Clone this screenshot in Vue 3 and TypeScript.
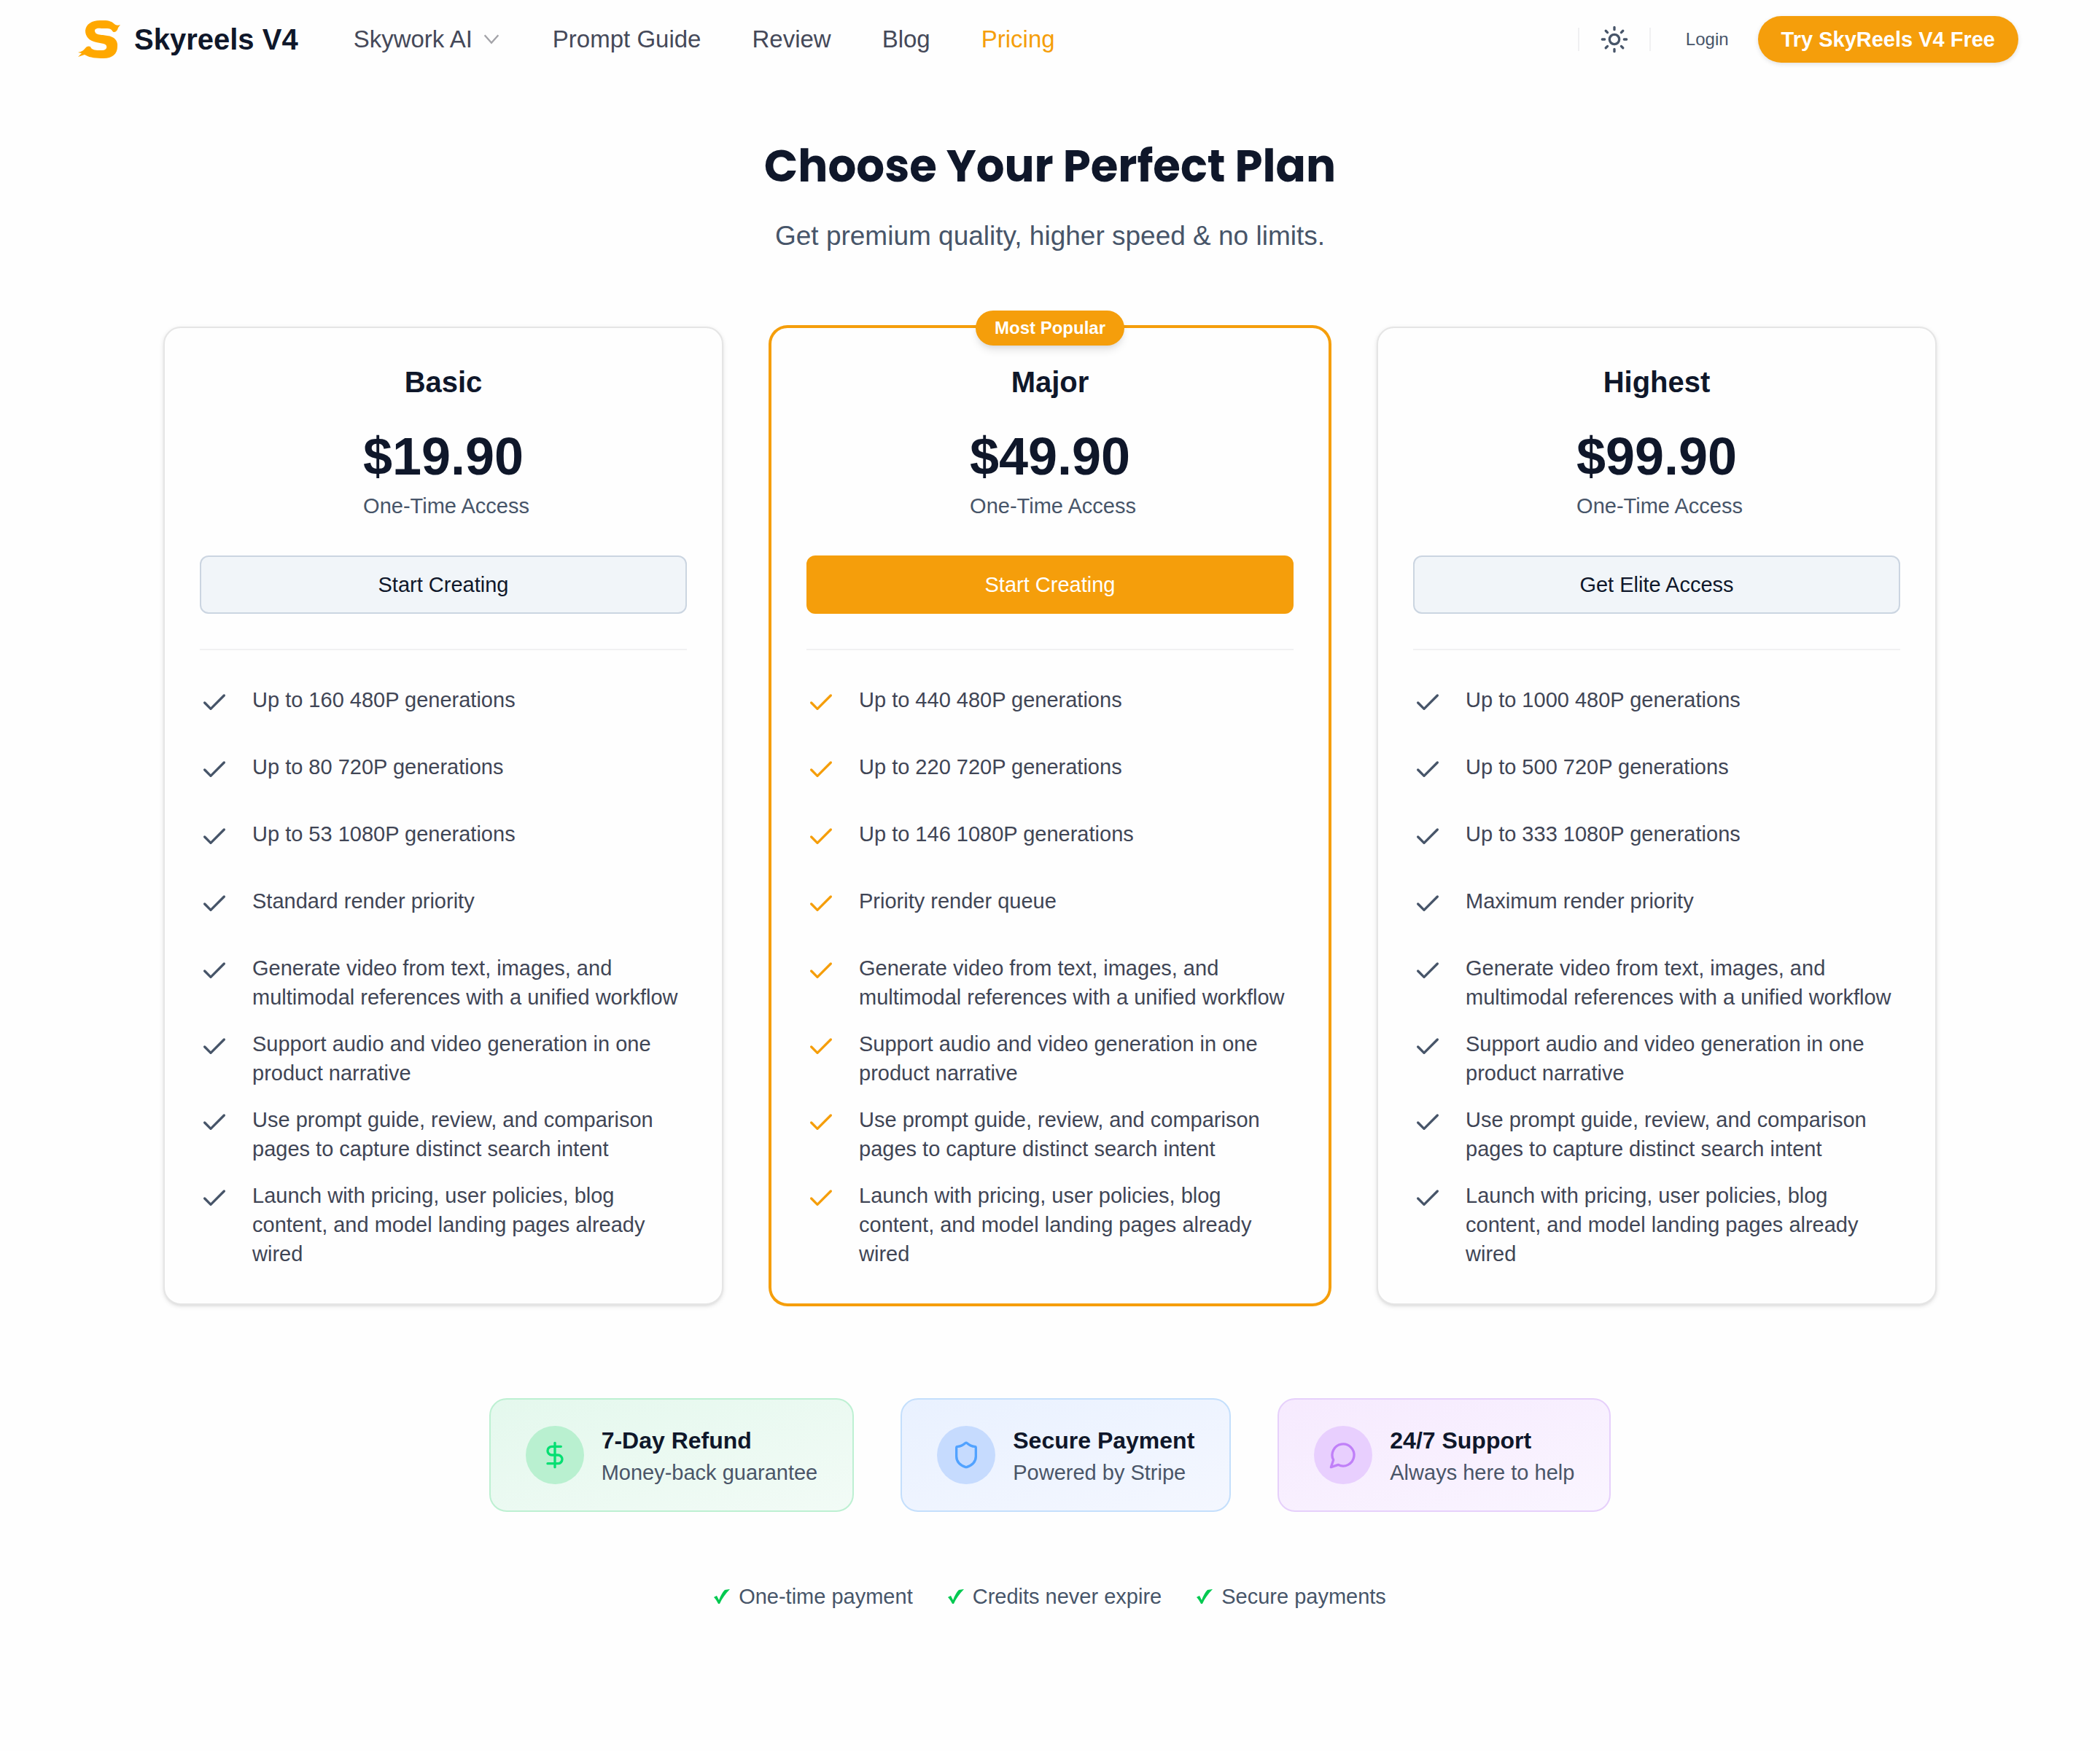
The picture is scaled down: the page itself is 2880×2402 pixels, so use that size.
<script setup lang="ts">
interface Plan {
  name: string
  price: string
  action: string
  popular?: boolean
  features: string[]
}

const shared: string[] = [
  'Generate video from text, images, and multimodal references with a unified workflow',
  'Support audio and video generation in one product narrative',
  'Use prompt guide, review, and comparison pages to capture distinct search intent',
  'Launch with pricing, user policies, blog content, and model landing pages already wired',
]

const plans: Plan[] = [
  {
    name: 'Basic',
    price: '$19.90',
    action: 'Start Creating',
    features: ['Up to 160 480P generations', 'Up to 80 720P generations', 'Up to 53 1080P generations', 'Standard render priority', ...shared],
  },
  {
    name: 'Major',
    price: '$49.90',
    action: 'Start Creating',
    popular: true,
    features: ['Up to 440 480P generations', 'Up to 220 720P generations', 'Up to 146 1080P generations', 'Priority render queue', ...shared],
  },
  {
    name: 'Highest',
    price: '$99.90',
    action: 'Get Elite Access',
    features: ['Up to 1000 480P generations', 'Up to 500 720P generations', 'Up to 333 1080P generations', 'Maximum render priority', ...shared],
  },
]

const badges = [
  {
    tone: 'green',
    title: '7-Day Refund',
    text: 'Money-back guarantee',
    paths: ['M12 2v20', 'M17 5H9.5a3.5 3.5 0 0 0 0 7h5a3.5 3.5 0 0 1 0 7H6'],
  },
  {
    tone: 'blue',
    title: 'Secure Payment',
    text: 'Powered by Stripe',
    paths: [
      'M20 13c0 5-3.5 7.5-7.66 8.95a1 1 0 0 1-.67-.01C7.5 20.5 4 18 4 13V6a1 1 0 0 1 1-1c2 0 4.5-1.2 6.24-2.72a1.17 1.17 0 0 1 1.52 0C14.51 3.81 17 5 19 5a1 1 0 0 1 1 1z',
    ],
  },
  {
    tone: 'purple',
    title: '24/7 Support',
    text: 'Always here to help',
    paths: ['M7.9 20A9 9 0 1 0 4 16.1L2 22Z'],
  },
]

const notes: string[] = ['One-time payment', 'Credits never expire', 'Secure payments']
</script>

<template>
  <div class="page">
    <header class="header">
      <a class="brand" href="#">
        <svg class="logo" viewBox="0 0 64 64" aria-hidden="true">
          <path
            d="M61 12 L58 16 C57 20 55 22 52 22 C50 22 50 17 43 17 L35 17 C28 16 24 18 27 23 C28 25 33 26 37 26 L43 27 C53 28 58 34 57 42 C57 52 50 58 38 58 C28 58 19 57 14 54 L12 53 L3 56 L8 51 L3 50 C8 49 11 47 13 44 C15 41 18 41 20 42 C21 46 26 47 32 47 L36 47 C44 47 44 39 38 38 L28 36 C18 34 13 28 13 20 C14 11 22 6 33 6 L38 6 C46 6 50 8 53 11 C55 13 58 13 61 12 Z"
          />
        </svg>
        <span>Skyreels V4</span>
      </a>
      <nav class="nav">
        <button class="menu" type="button">
          Skywork AI
          <svg class="chevron" viewBox="0 0 24 24" aria-hidden="true"><path d="m4 7 8 9 8-9" /></svg>
        </button>
        <a href="#">Prompt Guide</a>
        <a href="#">Review</a>
        <a href="#">Blog</a>
        <a class="current" href="#">Pricing</a>
      </nav>
      <div class="tools">
        <div class="theme">
          <button type="button" aria-label="Theme">
            <svg class="icon" viewBox="0 0 24 24" aria-hidden="true">
              <circle cx="12" cy="12" r="4" />
              <path
                d="M12 2v2M12 20v2M4.93 4.93l1.41 1.41M17.66 17.66l1.41 1.41M2 12h2M20 12h2M6.34 17.66l-1.41 1.41M19.07 4.93l-1.41 1.41"
              />
            </svg>
          </button>
        </div>
        <a class="login" href="#">Login</a>
        <a class="cta" href="#">Try SkyReels V4 Free</a>
      </div>
    </header>

    <main class="main">
      <h1>Choose Your Perfect Plan</h1>
      <p class="lead">Get premium quality, higher speed &amp; no limits.</p>

      <section class="plans">
        <article v-for="plan in plans" :key="plan.name" class="plan" :class="{ popular: plan.popular }">
          <span v-if="plan.popular" class="ribbon">Most Popular</span>
          <h2>{{ plan.name }}</h2>
          <p class="price">{{ plan.price }}</p>
          <p class="term">One-Time Access</p>
          <button class="action" type="button">{{ plan.action }}</button>
          <ul class="features">
            <li v-for="feature in plan.features" :key="feature">
              <svg class="icon" viewBox="0 0 24 24" aria-hidden="true"><path d="M20 6 9 17l-5-5" /></svg>
              <span>{{ feature }}</span>
            </li>
          </ul>
        </article>
      </section>

      <section class="badges">
        <div v-for="badge in badges" :key="badge.title" class="badge" :class="badge.tone">
          <div class="disc">
            <svg class="icon" viewBox="0 0 24 24" aria-hidden="true">
              <path v-for="d in badge.paths" :key="d" :d="d" />
            </svg>
          </div>
          <div>
            <h3>{{ badge.title }}</h3>
            <p>{{ badge.text }}</p>
          </div>
        </div>
      </section>

      <ul class="notes">
        <li v-for="note in notes" :key="note">
          <svg class="tick" viewBox="0 0 22 20" aria-hidden="true">
            <path d="M0 11 L4 9 C5 11 6 13 7 15 C9 9 12 4 15 1 L22 0 C16 6 11 13 8 20 L6 20 C4 16 2 13 0 11 Z" />
          </svg>
          {{ note }}
        </li>
      </ul>
    </main>
  </div>
</template>

<style>
body {
  margin: 0;
  background: #fefefe;
}
</style>

<style scoped>
.page {
  min-height: 100vh;
  font-family: "Liberation Sans", Arial, Helvetica, sans-serif;
  font-size: 29px;
  line-height: 40px;
  color: #0f172a;
}
h1,
h2,
h3,
p,
ul {
  margin: 0;
  padding: 0;
}
ul {
  list-style: none;
}
a {
  color: inherit;
  text-decoration: none;
}
button {
  padding: 0;
  border: 0;
  background: none;
  color: inherit;
  font: inherit;
  cursor: pointer;
}
.icon {
  display: block;
  flex: none;
  width: 40px;
  height: 40px;
  fill: none;
  stroke: currentColor;
  stroke-width: 2;
  stroke-linecap: round;
  stroke-linejoin: round;
}

.header {
  display: flex;
  align-items: center;
  height: 108px;
  padding: 0 112px 0 104px;
}
.brand {
  display: flex;
  align-items: center;
  gap: 16px;
  font-size: 40px;
  font-weight: 700;
}
.logo {
  width: 64px;
  height: 64px;
  fill: #ffa800;
}
.nav {
  display: flex;
  align-items: center;
  gap: 70px;
  margin-left: 76px;
  font-size: 33px;
  color: #454959;
}
.menu {
  display: flex;
  align-items: center;
  gap: 12px;
}
.chevron {
  width: 28px;
  height: 28px;
  fill: none;
  stroke: #a3a3a8;
  stroke-width: 2;
}
.current {
  color: #f59e0b;
}
.tools {
  display: flex;
  align-items: center;
  margin-left: auto;
  color: #475569;
}
.theme {
  display: flex;
  align-items: center;
  height: 32px;
  padding: 0 28px;
  border-left: 2px solid #f0f0f2;
  border-right: 2px solid #f0f0f2;
}
.login {
  margin: 0 40px 0 48px;
  font-size: 24px;
}
.cta {
  padding: 12px 32px;
  border-radius: 32px;
  background: #f59e0b;
  box-shadow: 0 2px 6px rgba(0, 0, 0, 0.12);
  color: #fff;
  font-weight: 700;
}

.main {
  display: flex;
  flex-direction: column;
  align-items: center;
  padding: 84px 64px 192px;
}
h1 {
  font-family: Poppins, Inter, sans-serif;
  font-size: 61px;
  line-height: 72px;
  font-weight: 700;
}
.lead {
  margin-top: 32px;
  font-size: 37px;
  line-height: 56px;
  color: #475569;
}

.plans {
  display: grid;
  grid-template-columns: repeat(3, minmax(0, 1fr));
  gap: 64px;
  width: 100%;
  max-width: 2432px;
  margin-top: 96px;
}
.plan {
  position: relative;
  display: flex;
  flex-direction: column;
  padding: 48px;
  border: 2px solid #e5e5e5;
  border-radius: 24px;
  background: #fefefe;
  box-shadow: 0 2px 6px rgba(0, 0, 0, 0.1), 0 2px 4px -2px rgba(0, 0, 0, 0.1);
  text-align: center;
}
.popular {
  border-color: #f59e0b;
  box-shadow: 0 0 0 2px #f59e0b;
}
.ribbon {
  position: absolute;
  top: -24px;
  left: 50%;
  transform: translateX(-50%);
  padding: 8px 26px;
  border-radius: 24px;
  background: #f59e0b;
  box-shadow: 0 8px 12px -2px rgba(0, 0, 0, 0.1), 0 4px 8px -4px rgba(0, 0, 0, 0.1);
  color: #fff;
  font-size: 24px;
  line-height: 32px;
  font-weight: 700;
  white-space: nowrap;
}
h2 {
  font-size: 40px;
  line-height: 52px;
}
.price {
  margin-top: 36px;
  font-size: 72px;
  line-height: 80px;
  font-weight: 700;
}
.term {
  margin: 8px 0 48px 8px;
  color: #475569;
}
.action {
  height: 80px;
  border: 2px solid #cbd5e1;
  border-radius: 12px;
  background: #f1f5f9;
}
.popular .action {
  border-color: #f59e0b;
  background: #f59e0b;
  color: #fff;
}
.features {
  display: flex;
  flex-direction: column;
  gap: 24px;
  margin-top: 48px;
  padding-top: 48px;
  border-top: 2px solid #f1f1f2;
  color: #404555;
  text-align: left;
}
.features li {
  display: flex;
  gap: 32px;
  min-height: 68px;
}
.features .icon {
  margin-top: 4px;
  color: #475569;
}
.popular .features .icon {
  color: #f59e0b;
}

.badges {
  display: flex;
  flex-wrap: wrap;
  justify-content: center;
  gap: 64px;
  margin-top: 128px;
}
.badge {
  display: flex;
  align-items: center;
  gap: 24px;
  padding: 32px 48px;
  border: 2px solid;
  border-radius: 24px;
}
.badge h3 {
  font-size: 32px;
  line-height: 48px;
}
.badge p {
  color: #4a5568;
}
.disc {
  display: flex;
  align-items: center;
  justify-content: center;
  width: 80px;
  height: 80px;
  border-radius: 50%;
}
.green {
  border-color: #bdf0d2;
  background: linear-gradient(to bottom right, #e4f8ed, #f2fbf6);
}
.green .disc {
  background: #b9f0d0;
  color: #05df72;
}
.blue {
  border-color: #c4dffc;
  background: linear-gradient(to bottom right, #e9f1ff, #f4f7ff);
}
.blue .disc {
  background: #c6dbfe;
  color: #51a2ff;
}
.purple {
  border-color: #e6d0fb;
  background: linear-gradient(to bottom right, #f6eafe, #faf5ff);
}
.purple .disc {
  background: #e8cffe;
  color: #c080f8;
}

.notes {
  display: flex;
  flex-wrap: wrap;
  justify-content: center;
  gap: 48px;
  margin-top: 96px;
  color: #475569;
}
.notes li {
  display: flex;
  align-items: center;
  gap: 12px;
}
.tick {
  width: 22px;
  height: 20px;
  fill: #00c950;
}
</style>
